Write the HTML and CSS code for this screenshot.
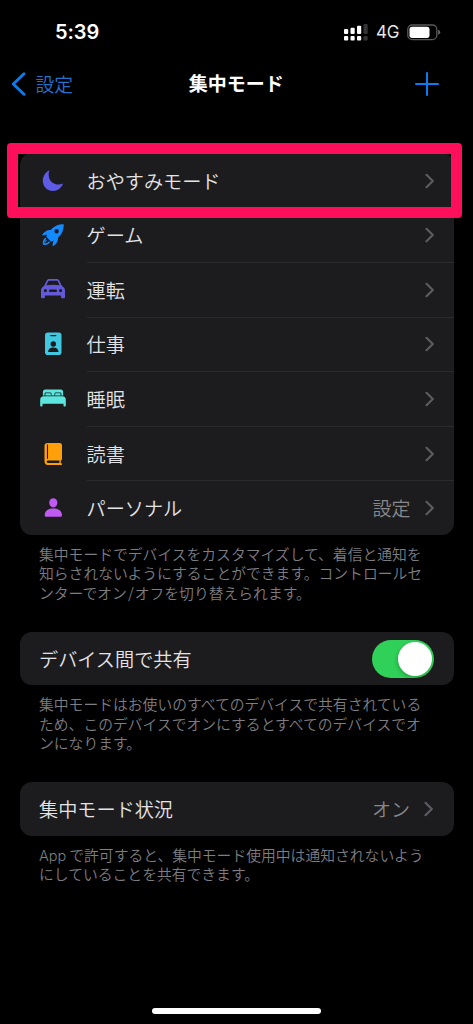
FILE: index.html
```html
<!DOCTYPE html>
<html lang="ja">
<head>
<meta charset="utf-8">
<title>集中モード</title>
<link rel="stylesheet" href="styles.css">
</head>
<body>
<svg class="defs" width="0" height="0"><symbol id="chev" viewBox="0 0 10 16"><path d="M1.500 1.800 7.800 8l-6.300 6.200" fill="none" stroke="#5b5b60" stroke-width="2.200" stroke-linecap="round" stroke-linejoin="round"/></symbol></svg>
<div class="screen">
  <header class="status">
    <span class="time">5:39</span>
    <div class="signals">
      <svg width="24" height="18" viewBox="0 0 24 18" fill="#fff"><rect x="0" y="6" width="4.200" height="5" rx="1"/><rect x="6.500" y="4.700" width="4.200" height="6.300" rx="1"/><rect x="13" y="2.700" width="4.200" height="8.300" rx="1"/><rect x="19.500" y="1" width="4.200" height="10" rx="1" fill="#343436"/><rect x="0" y="13" width="4.200" height="4.600" rx="1"/><rect x="6.500" y="13" width="4.200" height="4.600" rx="1"/><rect x="13" y="13" width="4.200" height="4.600" rx="1"/><rect x="19.500" y="13" width="4.200" height="4.600" rx="1" fill="#343436"/></svg>
      <span class="net">4G</span>
      <svg width="34" height="17" viewBox="0 0 34 17"><rect x=".8" y="1" width="29" height="14.600" rx="4.400" fill="none" stroke="#59595b" stroke-width="1.300"/><rect x="2.500" y="2.700" width="20" height="11.200" rx="2.600" fill="#fff"/><path d="M31.200 5.800q2 .7 2 2.500t-2 2.500z" fill="#6a6a6c"/></svg>
    </div>
  </header>
  <nav class="nav">
    <div class="back"><svg width="15" height="24" viewBox="0 0 15 24"><path d="M13 1.800 2.300 12 13 22.200" fill="none" stroke="#0a7cf0" stroke-width="2.900" stroke-linecap="round" stroke-linejoin="round"/></svg><span class="back-label">設定</span></div>
    <h1 class="title">集中モード</h1>
    <svg class="plus" width="24" height="24" viewBox="0 0 24 24"><path d="M12 1v22M1 12h22" stroke="#0a7cf0" stroke-width="2" stroke-linecap="round"/></svg>
  </nav>
  <main>
    <section class="group">
      <div class="card modes">
        <div class="row">
          <svg class="icon" viewBox="0 0 30 30"><path d="M11.500 4.200C9.700 9 11 14 14.600 16.800c3.200 2.300 7 2.200 10.500.8C23.500 22.200 19.500 25 15 25 9.200 25 4.800 20.500 4.800 14.800c0-4.700 2.600-8.800 6.700-10.600Z" fill="#5e5ce6"/></svg>
          <span class="label">おやすみモード</span><svg class="chev"><use href="#chev"/></svg>
        </div>
        <div class="row">
          <svg class="icon" viewBox="0 0 30 30"><path fill="#148aff" fill-rule="evenodd" d="M25.700 4.200C20.500 4 16 6 12.700 10.100 9.500 9.700 7 11.200 4.400 14.500c-.4.600.2 1.200.8 1l4-1-.9 2.300 4.800 4.900 2.400-1.100-1 4.500c-.1.700.5 1.100 1.100.6 3.300-2.500 4.800-5 4.400-8.300 3.900-3 5.900-7.700 5.700-13.200Zm-7.100 4.900a2.200 2.200 0 1 1 0 4.400 2.200 2.200 0 0 1 0-4.400Z"/><path d="M7.500 18.600c-1.800 1-2.100 3-1.800 5.400 2.400.4 4.400-.1 5.400-1.900" fill="none" stroke="#148aff" stroke-width="1.600" stroke-linecap="round"/><path d="M7.300 22.300c.1-1 .5-1.700 1.200-2.100" stroke="#148aff" stroke-width="1.200" fill="none"/></svg>
          <span class="label">ゲーム</span><svg class="chev"><use href="#chev"/></svg>
        </div>
        <div class="row">
          <svg class="icon" viewBox="0 0 30 30"><path fill="#625ad8" fill-rule="evenodd" d="M8.700 5.500Q9.400 4.200 10.800 4.100q4.200-.4 8.400 0 1.400.1 2.100 1.400l2.400 5.100 1.300 1.200q2 1.200 2 3.400v7q0 1.100-1.100 1.100h-1.700q-1.100 0-1.100-1.100v-1.700H6.900v1.700q0 1.100-1.100 1.100H4.100Q3 23.300 3 22.200v-7q0-2.200 2-3.400l1.300-1.200ZM10.200 6.300 8.400 10.200q6.600-.7 13.200 0l-1.800-3.900q-.3-.5-.9-.5-3.900-.3-7.800 0-.6 0-.9.500ZM7.400 14a1.600 1.600 0 1 0 0 3.200 1.600 1.600 0 0 0 0-3.200Zm15.200 0a1.600 1.600 0 1 0 0 3.200 1.600 1.600 0 0 0 0-3.200ZM12.200 14.400a1.300 1.300 0 0 0 0 2.600h5.600a1.300 1.300 0 0 0 0-2.600Z"/></svg>
          <span class="label">運転</span><svg class="chev"><use href="#chev"/></svg>
        </div>
        <div class="row">
          <svg class="icon" viewBox="0 0 30 30"><rect x="7" y="3.600" width="16.500" height="22.400" rx="2.800" fill="#40c8e0"/><rect x="12.200" y="5.900" width="6.200" height="1.300" rx=".6" fill="#1c1c1e"/><circle cx="15.300" cy="15" r="2.700" fill="#1c1c1e"/><path d="M10 23.100c.3-3.200 2.300-4.500 5.300-4.500s5 1.300 5.300 4.500Z" fill="#1c1c1e"/></svg>
          <span class="label">仕事</span><svg class="chev"><use href="#chev"/></svg>
        </div>
        <div class="row">
          <svg class="icon" viewBox="0 0 30 30"><g fill="#5de6de"><path d="M4.900 11.400V8q0-2.500 2.500-2.500h15.200q2.500 0 2.500 2.500v3.400h-1.700V9.600q0-1-1-1h-4.700q-1.200 0-1.200 1.200v1.600h-3V9.800q0-1.200-1.200-1.200H7.600q-1 0-1 1v1.800Z"/><path d="M7.400 11.600V9.900q0-.7.700-.7h4q.8 0 .8.800v1.600Zm9.700 0V10q0-.8.800-.8h4q.7 0 .7.700v1.700ZM2.200 16q0-3.700 3.500-3.700h18.600q3.500 0 3.500 3.700v5.500q0 .9-.8.900h-.7q-.8 0-.8-.9v-1.700h-21v1.700q0 .9-.8.900H3q-.8 0-.8-.9Z"/></g></svg>
          <span class="label">睡眠</span><svg class="chev"><use href="#chev"/></svg>
        </div>
        <div class="row">
          <svg class="icon" viewBox="0 0 30 30"><path d="M9.600 4h12.100q2.300 0 2.300 2.300v13.600q0 1.200-1.200 1.400v2.900h.4a.9.900 0 0 1 0 1.800H10q-3.500 0-3.500-3.700V7q0-3 3.100-3Z" fill="#ff9f0a"/><path d="M9.500 5.500v14.300" stroke="#1c1c1e" stroke-width="1.100"/><path d="M21.400 21.600v2.500H10.200q-1.500 0-1.500-1.300 0-1.200 1.500-1.200Z" fill="#1c1c1e"/></svg>
          <span class="label">読書</span><svg class="chev"><use href="#chev"/></svg>
        </div>
        <div class="row">
          <svg class="icon" viewBox="0 0 30 30" fill="#bf5af2"><ellipse cx="15.300" cy="9.800" rx="4.100" ry="4.600"/><path d="M6.700 22.200c0-4 3.300-6.600 8.600-6.600s8.700 2.600 8.700 6.600q0 1.600-1.600 1.600H8.300q-1.600 0-1.600-1.600Z"/></svg>
          <span class="label">パーソナル</span><span class="value">設定</span><svg class="chev"><use href="#chev"/></svg>
        </div>
      </div>
      <p class="note">集中モードでデバイスをカスタマイズして、着信と通知を<br>知らされないようにすることができます。コントロールセ<br>ンターでオン<span class="slash">/</span>オフを切り替えられます。</p>
      <div class="highlight"></div>
    </section>
    <section class="group share">
      <div class="card single"><span class="label">デバイス間で共有</span><span class="toggle"><span class="knob"></span></span></div>
      <p class="note">集中モードはお使いのすべてのデバイスで共有されている<br>ため、このデバイスでオンにするとすべてのデバイスでオ<br>ンになります。</p>
    </section>
    <section class="group state">
      <div class="card single"><span class="label">集中モード状況</span><span class="value">オン</span><svg class="chev"><use href="#chev"/></svg></div>
      <p class="note"><span class="latin">App</span>で許可すると、集中モード使用中は通知されないよう<br>にしていることを共有できます。</p>
    </section>
  </main>
  <div class="home"></div>
</div>
</body>
</html>
```
FILE: styles.css
```css
* { box-sizing: border-box; }
body { margin: 0; background: #000; color: #e4e4e6; font-family: "Noto Sans CJK JP", sans-serif; font-weight: 350; }
svg { display: block; flex: none; }
.defs { position: absolute; }
.screen { width: 473px; height: 1024px; background: #000; overflow: hidden; display: flex; flex-direction: column; }
.status { height: 62px; padding: 2px 32px 0 55px; display: flex; align-items: center; justify-content: space-between; font-family: Inter, sans-serif; color: #fff; }
.time { font-size: 20px; font-weight: 600; letter-spacing: -.1px; }
.signals { display: flex; align-items: center; }
.net { font-size: 17px; font-weight: 400; color: #e6e6e6; margin: 0 7px 0 8px; width: 24px; letter-spacing: -.2px; }
.nav { height: 44px; padding: 0 34px 0 10.500px; display: grid; grid-template-columns: 120px 1fr 97px; align-items: center; }
.back { display: flex; align-items: center; gap: 10px; font-size: 18.800px; color: #2671cd; }
.back-label { padding-bottom: 2px; }
.title { margin: 0; font-size: 19px; font-weight: 700; color: #fff; text-align: center; line-height: 42px; padding-bottom: 2px; }
.plus { justify-self: end; }
main { flex: 1; padding: 47px 19.500px 0; }
.group { position: relative; }
.card { background: #1c1c1e; border-radius: 12px; overflow: hidden; }
.row { height: 54.570px; display: flex; align-items: center; padding: 1px 19px 0 18px; position: relative; }
.row + .row::before { content: ""; position: absolute; top: 0; left: 67px; right: 0; height: 1px; background: #2b2b2e; }
.icon { width: 30px; height: 30px; margin-right: 19px; }
.label { flex: 1; font-size: 19.150px; line-height: 28px; white-space: nowrap; }
.value { font-size: 19px; line-height: 28px; color: #87878c; margin-right: 14px; }
.chev { width: 10px; height: 16px; }
.note { margin: 9px 0 0 19.500px; font-size: 14.800px; line-height: 19.300px; color: #7d7d82; white-space: nowrap; }
.slash { padding: 0 1px; }
.latin { font-family: Inter, sans-serif; line-height: 1; margin-right: 3px; font-size: 14.500px; }
.highlight { position: absolute; left: -13px; top: -10px; width: 455.500px; height: 75px; border: 11px solid #ff0f5b; border-radius: 4px; }
.share { margin-top: 30px; }
.state { margin-top: 30px; }
.single { height: 53.500px; padding: 0 19.500px; display: flex; align-items: center; }
.toggle { width: 62px; height: 38px; border-radius: 19px; background: #30d158; padding: 2px; display: flex; justify-content: flex-end; }
.knob { width: 34px; height: 34px; border-radius: 50%; background: #fff; box-shadow: -1px 2px 4px #0003; }
.home { width: 169px; height: 6px; border-radius: 3px; background: #fff; margin: 0 auto 10px; }
```
